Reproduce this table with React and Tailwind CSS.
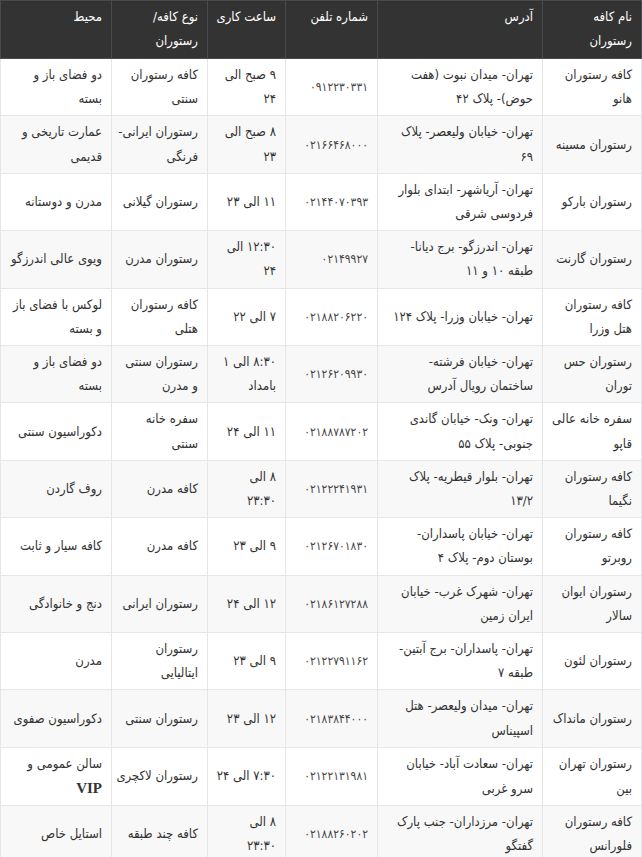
const headers = [["نام کافه", "رستوران"], ["آدرس"], ["شماره تلفن"], ["ساعت کاری"], ["نوع کافه/", "رستوران"], ["محیط"]];

const rows = [
  [["کافه رستوران", "هانو"], ["تهران- میدان نبوت (هفت", "حوض)- پلاک ۴۲"], "۰۹۱۲۲۳۰۳۳۱", ["۹ صبح الی", "۲۴"], ["کافه رستوران", "سنتی"], ["دو فضای باز و", "بسته"]],
  [["رستوران مسینه"], ["تهران- خیابان ولیعصر- پلاک", "۶۹"], "۰۲۱۶۶۴۶۸۰۰۰", ["۸ صبح الی", "۲۳"], ["رستوران ایرانی-", "فرنگی"], ["عمارت تاریخی و", "قدیمی"]],
  [["رستوران بارکو"], ["تهران- آریاشهر- ابتدای بلوار", "فردوسی شرقی"], "۰۲۱۴۴۰۷۰۳۹۳", ["۱۱ الی ۲۳"], ["رستوران گیلانی"], ["مدرن و دوستانه"]],
  [["رستوران گارنت"], ["تهران- اندرزگو- برج دیانا-", "طبقه ۱۰ و ۱۱"], "۰۲۱۴۹۹۲۷", ["۱۲:۳۰ الی", "۲۴"], ["رستوران مدرن"], ["ویوی عالی اندرزگو"]],
  [["کافه رستوران", "هتل وزرا"], ["تهران- خیابان وزرا- پلاک ۱۲۴"], "۰۲۱۸۸۲۰۶۲۲۰", ["۷ الی ۲۲"], ["کافه رستوران", "هتلی"], ["لوکس با فضای باز", "و بسته"]],
  [["رستوران حس", "توران"], ["تهران- خیابان فرشته-", "ساختمان رویال آدرس"], "۰۲۱۲۶۲۰۹۹۳۰", ["۸:۳۰ الی ۱", "بامداد"], ["رستوران سنتی", "و مدرن"], ["دو فضای باز و", "بسته"]],
  [["سفره خانه عالی", "قاپو"], ["تهران- ونک- خیابان گاندی", "جنوبی- پلاک ۵۵"], "۰۲۱۸۸۷۸۷۲۰۲", ["۱۱ الی ۲۴"], ["سفره خانه", "سنتی"], ["دکوراسیون سنتی"]],
  [["کافه رستوران", "نگیما"], ["تهران- بلوار قیطریه- پلاک", "۱۳/۲"], "۰۲۱۲۲۲۴۱۹۳۱", ["۸ الی", "۲۳:۳۰"], ["کافه مدرن"], ["روف گاردن"]],
  [["کافه رستوران", "روبرتو"], ["تهران- خیابان پاسداران-", "بوستان دوم- پلاک ۴"], "۰۲۱۲۶۷۰۱۸۳۰", ["۹ الی ۲۳"], ["کافه مدرن"], ["کافه سیار و ثابت"]],
  [["رستوران ایوان", "سالار"], ["تهران- شهرک غرب- خیابان", "ایران زمین"], "۰۲۱۸۶۱۲۷۲۸۸", ["۱۲ الی ۲۴"], ["رستوران ایرانی"], ["دنج و خانوادگی"]],
  [["رستوران لئون"], ["تهران- پاسداران- برج آبتین-", "طبقه ۷"], "۰۲۱۲۲۷۹۱۱۶۲", ["۹ الی ۲۳"], ["رستوران", "ایتالیایی"], ["مدرن"]],
  [["رستوران مانداک"], ["تهران- میدان ولیعصر- هتل", "اسپیناس"], "۰۲۱۸۳۸۴۴۰۰۰", ["۱۲ الی ۲۳"], ["رستوران سنتی"], ["دکوراسیون صفوی"]],
  [["رستوران تهران", "بین"], ["تهران- سعادت آباد- خیابان", "سرو غربی"], "۰۲۱۲۲۱۳۱۹۸۱", ["۷:۳۰ الی ۲۴"], ["رستوران لاکچری"], ["سالن عمومی و", "VIP"]],
  [["کافه رستوران", "فلورانس"], ["تهران- مرزداران- جنب پارک", "گفتگو"], "۰۲۱۸۸۲۶۰۲۰۲", ["۸ الی", "۲۳:۳۰"], ["کافه چند طبقه"], ["استایل خاص"]],
];

const widths = ["w-[99px]", "w-[165px]", "w-[92px]", "w-[78px]", "w-[96px]", "w-[111px]"];

function Lines({ lines }) {
  return lines.map((l, i) => (
    <span key={i} className="block whitespace-nowrap">
      {l === "VIP" ? <span className="font-['Liberation_Serif',serif] font-bold text-[15px]">VIP</span> : l}
    </span>
  ));
}

export default function App() {
  return (
    <div dir="rtl" className="w-[642px] bg-white font-['DejaVu_Sans_Condensed','DejaVu_Sans',sans-serif] text-[13px] text-[#333]">
      <table className="w-[641px] table-fixed border-collapse">
        <thead>
          <tr className="bg-[#333333] text-white">
            {headers.map((h, i) => (
              <th key={i} className={`${widths[i]} h-[58px] border border-[#4a4a4a] px-[9px] py-1 text-right align-top font-normal leading-[24.2px]`}>
                <Lines lines={h} />
              </th>
            ))}
          </tr>
        </thead>
        <tbody>
          {rows.map((r, ri) => (
            <tr key={ri} className={ri % 2 === 1 ? "bg-[#f8f8f8]" : "bg-white"}>
              {r.map((c, ci) => (
                <td key={ci} className="h-[57.4px] overflow-hidden border border-[#e6e6e6] px-[9px] py-1 text-right align-middle leading-[24.2px]">
                  {typeof c === "string" ? <span className="text-[12px] text-[#444]">{c}</span> : <Lines lines={c} />}
                </td>
              ))}
            </tr>
          ))}
        </tbody>
      </table>
    </div>
  );
}
